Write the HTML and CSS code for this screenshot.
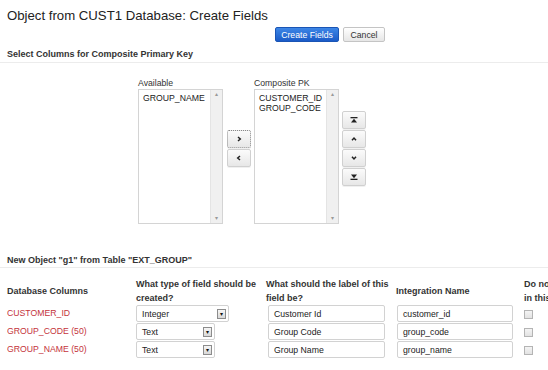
FILE: index.html
```html
<!DOCTYPE html>
<html lang="en">
<head>
  <meta charset="UTF-8">
  <title>Object from CUST1 Database: Create Fields</title>
  <link rel="stylesheet" href="styles.css">
</head>
<body>
  <h1 class="title">Object from CUST1 Database: Create Fields</h1>

  <div class="actions">
    <button class="btn btn-primary">Create Fields</button>
    <button class="btn btn-plain">Cancel</button>
  </div>

  <!-- Composite key picker -->
  <h2 class="section-head">Select Columns for Composite Primary Key</h2>
  <div class="picklist">
    <div class="pick-col">
      <div class="pick-label">Available</div>
      <div class="listbox">
        <div class="list-items">
          <div>GROUP_NAME</div>
        </div>
        <div class="scroll"><span class="arr">&#9652;</span><span class="arr">&#9662;</span></div>
      </div>
    </div>

    <div class="move-btns">
      <button class="sq-btn focused"><svg width="6" height="6" viewBox="0 0 6 6"><path d="M2 1 L4.3 3 L2 5" fill="none" stroke="#222" stroke-width="1.5"/></svg></button>
      <button class="sq-btn"><svg width="6" height="6" viewBox="0 0 6 6"><path d="M4 1 L1.7 3 L4 5" fill="none" stroke="#222" stroke-width="1.5"/></svg></button>
    </div>

    <div class="pick-col">
      <div class="pick-label">Composite PK</div>
      <div class="listbox">
        <div class="list-items">
          <div>CUSTOMER_ID</div>
          <div>GROUP_CODE</div>
        </div>
        <div class="scroll"><span class="arr">&#9652;</span><span class="arr">&#9662;</span></div>
      </div>
    </div>

    <div class="order-btns">
      <button class="sq-btn"><svg width="8" height="6" viewBox="0 0 8 6"><rect x="0.5" y="0" width="7" height="1.3" fill="#222"/><path d="M4 1.8 L7 5.5 L1 5.5 Z" fill="#222"/></svg></button>
      <button class="sq-btn"><svg width="6" height="6" viewBox="0 0 6 6"><path d="M1 4.2 L3 2 L5 4.2" fill="none" stroke="#222" stroke-width="1.5"/></svg></button>
      <button class="sq-btn"><svg width="6" height="6" viewBox="0 0 6 6"><path d="M1 1.8 L3 4 L5 1.8" fill="none" stroke="#222" stroke-width="1.5"/></svg></button>
      <button class="sq-btn"><svg width="8" height="6" viewBox="0 0 8 6"><path d="M1 0.5 L7 0.5 L4 4.2 Z" fill="#222"/><rect x="0.5" y="4.7" width="7" height="1.3" fill="#222"/></svg></button>
    </div>
  </div>

  <!-- Field definitions -->
  <h2 class="section-head section-head-2">New Object "g1" from Table "EXT_GROUP"</h2>
  <div class="table-wrap">
    <table class="fields">
      <colgroup>
        <col class="c1"><col class="c2"><col class="c3"><col class="c4"><col class="c5">
      </colgroup>
      <thead>
        <tr>
          <th>Database Columns</th>
          <th>What type of field should be created?</th>
          <th>What should the label of this field be?</th>
          <th>Integration Name</th>
          <th>Do not<br>in this object?</th>
        </tr>
      </thead>
      <tbody>
        <tr>
          <td class="colname">CUSTOMER_ID</td>
          <td><div class="select wide"><span>Integer</span><span class="drop">&#9662;</span></div></td>
          <td><div class="input lbl">Customer Id</div></td>
          <td><div class="input api">customer_id</div></td>
          <td><span class="check"></span></td>
        </tr>
        <tr>
          <td class="colname">GROUP_CODE (50)</td>
          <td><div class="select"><span>Text</span><span class="drop">&#9662;</span></div></td>
          <td><div class="input lbl">Group Code</div></td>
          <td><div class="input api">group_code</div></td>
          <td><span class="check"></span></td>
        </tr>
        <tr>
          <td class="colname">GROUP_NAME (50)</td>
          <td><div class="select"><span>Text</span><span class="drop">&#9662;</span></div></td>
          <td><div class="input lbl">Group Name</div></td>
          <td><div class="input api">group_name</div></td>
          <td><span class="check"></span></td>
        </tr>
      </tbody>
    </table>
  </div>
</body>
</html>
```

FILE: styles.css
```css
body {
  margin: 0;
  font-family: "Liberation Sans", Arial, sans-serif;
  font-size: 8.7px;
  color: #222;
  background: #fff;
  overflow: hidden;
}
.title {
  margin: 0;
  padding: 8px 0 0 7px;
  font-size: 13.2px;
  line-height: 16px;
  font-weight: normal;
  color: #222;
}
.actions {
  display: flex;
  gap: 4px;
  margin-top: 3px;
  padding-left: 275px;
}
.btn {
  height: 15px;
  padding: 0;
  font-family: inherit;
  font-size: 8.7px;
  border-radius: 2px;
}
.btn-primary {
  width: 64px;
  color: #fff;
  background: linear-gradient(#3d86e6, #1a5bc8);
  border: 1px solid #1a55b5;
}
.btn-plain {
  width: 42px;
  color: #333;
  background: linear-gradient(#ffffff, #e6e6e6);
  border: 1px solid #c4c4c4;
}
.section-head {
  margin: 7px 0 0 0;
  padding: 0 0 2px 7px;
  font-size: 9px;
  line-height: 11px;
  color: #333;
  border-bottom: 1px solid #ececec;
}
.section-head-2 {
  margin-top: 31px;
  padding-bottom: 1px;
}
.picklist {
  display: flex;
  align-items: flex-start;
  margin-top: 15px;
  padding-left: 138px;
}
.pick-label {
  line-height: 11px;
  color: #333;
}
.listbox {
  display: flex;
  width: 85px;
  height: 135px;
  box-sizing: border-box;
  border: 1px solid #d4d4d4;
  background: #fff;
}
.list-items {
  flex: 1;
  padding: 3px 0 0 4px;
  line-height: 10px;
  color: #222;
}
.scroll {
  display: flex;
  flex-direction: column;
  justify-content: space-between;
  align-items: center;
  width: 11px;
  background: #f0f0f0;
  border-left: 1px solid #e4e4e4;
}
.arr {
  font-size: 6px;
  line-height: 9px;
  color: #999;
}
.move-btns,
.order-btns {
  display: flex;
  flex-direction: column;
  gap: 1px;
}
.move-btns {
  margin: 52px 3px 0 4px;
}
.order-btns {
  margin: 33px 0 0 3px;
}
.sq-btn {
  display: flex;
  align-items: center;
  justify-content: center;
  width: 24px;
  height: 18px;
  padding: 0;
  background: linear-gradient(#fbfbfb, #e7e7e7);
  border: 1px solid #d0d0d0;
  border-radius: 2px;
  box-shadow: 0 1px 0 rgba(0,0,0,0.06);
}
.sq-btn.focused {
  border: 1px dotted #888;
}
.table-wrap {
  margin: 10px 0 0 7px;
  overflow: hidden;
}
.fields {
  width: 660px;
  table-layout: fixed;
  border-collapse: collapse;
}
.c1 { width: 129px; }
.c2 { width: 130px; }
.c3 { width: 130px; }
.c4 { width: 128px; }
.c5 { width: 143px; }
.fields th {
  height: 27px;
  padding: 0 2px 0 0;
  text-align: left;
  vertical-align: middle;
  font-size: 9px;
  line-height: 13.5px;
  color: #333;
}
.fields td {
  height: 18px;
  padding: 0;
  vertical-align: top;
}
.colname {
  line-height: 17px;
  color: #c4333b;
}
.select,
.input {
  display: flex;
  align-items: center;
  height: 17px;
  box-sizing: border-box;
  border: 1px solid #d2d2d2;
  border-radius: 2px;
  background: #fff;
  padding-left: 5px;
  color: #222;
}
.select {
  justify-content: space-between;
  width: 79px;
  padding-right: 2px;
}
.select.wide {
  width: 93px;
}
.drop {
  width: 9px;
  height: 10px;
  box-sizing: border-box;
  border: 1px solid #8c8c8c;
  background: linear-gradient(#f6f6f6, #d8d8d8);
  font-size: 6px;
  line-height: 8px;
  text-align: center;
  color: #111;
}
.input.lbl {
  width: 117px;
  margin-left: 2px;
}
.input.api {
  width: 116px;
  margin-left: 1px;
}
.check {
  display: block;
  width: 9px;
  height: 9px;
  margin-top: 5px;
  box-sizing: border-box;
  border: 1px solid #b4b4b4;
  background: linear-gradient(#f4f4f4, #e2e2e2);
}
```
